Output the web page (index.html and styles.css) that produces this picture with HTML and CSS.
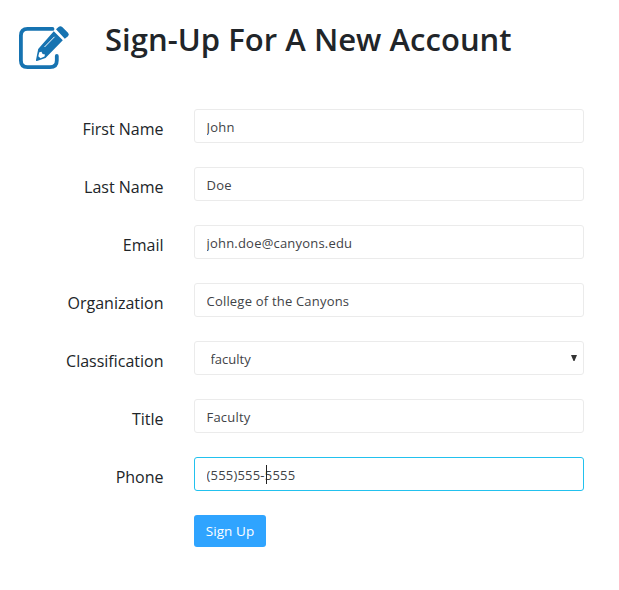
FILE: index.html
```html
<!DOCTYPE html>
<html lang="en">
<head>
<meta charset="utf-8">
<title>Sign-Up For A New Account</title>
<link rel="stylesheet" href="styles.css">
</head>
<body>
<header class="header">
  <svg class="logo" viewBox="0 0 52 46" aria-hidden="true">
    <path class="sheet" d="M34.5 3.9H9.5Q2.9 3.9 2.9 10.5V35.5Q2.9 42.1 9.5 42.1H32Q38.8 42.1 38.8 35.5V31"/>
    <path class="pencil" d="M35.8 6.3 44.8 15.2 27.5 33 19 36Q17.6 36.4 18 35L20.2 24ZM38 4.3 40.5 2Q42.4.4 44.2 2L50 7.7Q51.7 9.5 50 11.2L46.8 13.8Z"/>
    <path class="shine" d="M26.5 22 36.5 11.8"/>
    <path class="tip" d="M21.3 27.3 23.5 26.7 24.6 29 27 29.6 26.5 31.6 22.5 33.3 20.3 31.2Z"/>
  </svg>
  <h1 class="title">Sign-Up For A New Account</h1>
</header>
<form class="form">
  <label class="label" for="first">First Name</label>
  <div class="field"><input class="control" id="first" value="John"></div>
  <label class="label" for="last">Last Name</label>
  <div class="field"><input class="control" id="last" value="Doe"></div>
  <label class="label" for="email">Email</label>
  <div class="field"><input class="control" id="email" value="john.doe@canyons.edu"></div>
  <label class="label" for="org">Organization</label>
  <div class="field"><input class="control" id="org" value="College of the Canyons"></div>
  <label class="label" for="class">Classification</label>
  <div class="field">
    <select class="control select" id="class"><option>faculty</option></select>
    <svg class="arrow" viewBox="0 0 6 6" aria-hidden="true"><path d="M0 0H6L3.5 6H2.5Z"/></svg>
  </div>
  <label class="label" for="title">Title</label>
  <div class="field"><input class="control" id="title" value="Faculty"></div>
  <label class="label" for="phone">Phone</label>
  <div class="field"><input class="control active" id="phone" value="(555)555-5555"><span class="caret"></span></div>
  <button class="submit" type="button">Sign Up</button>
</form>
</body>
</html>
```
FILE: styles.css
```css
* { box-sizing: border-box; }
body {
  margin: 0;
  background: #fff;
  color: #212529;
  font-family: "Open Sans", "Noto Sans", sans-serif;
}
.header {
  display: flex;
  height: 109px;
  padding: 18px 0 0 18px;
}
.logo {
  width: 52px;
  height: 46px;
  margin-top: 7px;
}
.sheet { fill: none; stroke: #1673b1; stroke-width: 3.8; stroke-linecap: round; }
.pencil { fill: #1673b1; }
.shine { fill: none; stroke: #fff; stroke-width: 1; }
.tip { fill: #fff; }
.title {
  margin: 0 0 0 35px;
  font-size: 31px;
  line-height: 43px;
  font-weight: 600;
  letter-spacing: 0.04px;
  white-space: nowrap;
}
.form {
  display: grid;
  grid-template-columns: 163.5px 390px;
  column-gap: 30.5px;
  grid-auto-rows: 34px;
  row-gap: 24px;
}
.label {
  padding-top: 8px;
  font-size: 16px;
  line-height: 24px;
  text-align: right;
  white-space: nowrap;
}
.field { position: relative; }
.control {
  display: block;
  width: 390px;
  height: 34px;
  margin: 0;
  padding: 3px 11.5px 1px;
  border: 1px solid #ebebeb;
  border-radius: 3px;
  outline: 0;
  background: #fff;
  color: #3f4347;
  font: 13px/28px "Open Sans", "Noto Sans", sans-serif;
  letter-spacing: 0.2px;
}
.select { appearance: none; padding-left: 15.5px; letter-spacing: 0; }
.active { border-color: #22c1ee; }
.arrow {
  position: absolute;
  top: 14px;
  right: 7px;
  width: 6px;
  height: 6px;
  fill: #333;
}
.caret {
  position: absolute;
  top: 8px;
  left: 72px;
  width: 1px;
  height: 19px;
  background: #222;
}
.submit {
  grid-column: 2;
  width: 72px;
  height: 32px;
  padding: 0;
  border: 0;
  border-radius: 3px;
  background: #2fa4ff;
  color: #fff;
  font: 13.5px/32px "Open Sans", "Noto Sans", sans-serif;
  letter-spacing: 0.1px;
}
```
